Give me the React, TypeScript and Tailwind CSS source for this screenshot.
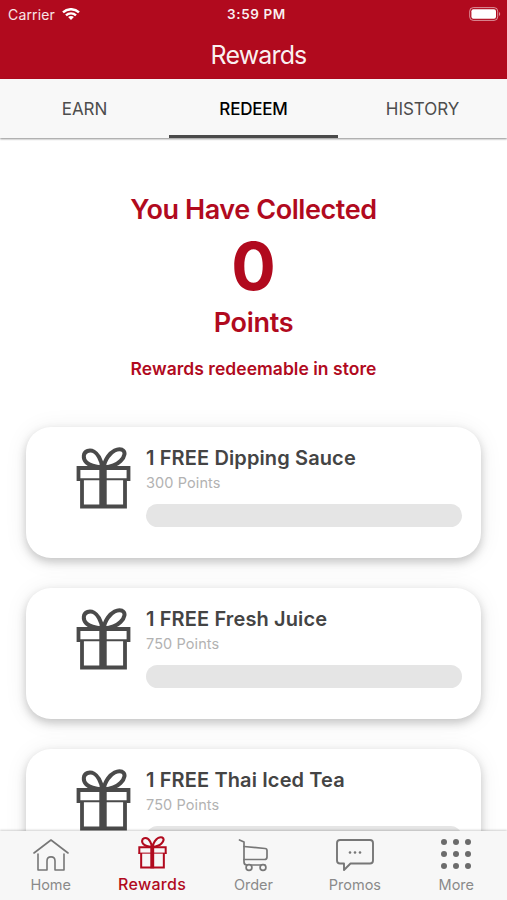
import { type ReactNode } from 'react'

type Reward = { id: number; name: string; points: number }

const rewards: Reward[] = [
  { id: 1, name: '1 FREE Dipping Sauce', points: 300 },
  { id: 2, name: '1 FREE Fresh Juice', points: 750 },
  { id: 3, name: '1 FREE Thai Iced Tea', points: 750 },
]

export default function App() {
  return (
    <div className="flex h-[900px] w-[507px] flex-col overflow-hidden bg-white font-['Inter',sans-serif]">
      <header className="h-[79px] shrink-0 bg-[#b10a1e] text-white">
        <div className="grid h-[27px] grid-cols-3 items-center pl-2 pr-[6px] text-[14px] leading-[27px]">
          <div className="flex items-center gap-[7px]">
            <span className="tracking-[0.15px] text-white/90">Carrier</span>
            <WifiIcon />
          </div>
          <span className="pl-1 pt-px text-center text-[13.5px] font-semibold tracking-[0.6px] text-white/95">3:59 PM</span>
          <div className="flex justify-end"><BatteryIcon /></div>
        </div>
        <h1 className="pl-[10px] text-center text-[25px] leading-[56px] tracking-[-0.85px] text-white/95">Rewards</h1>
      </header>

      <nav className="z-10 grid h-[59px] shrink-0 grid-cols-3 bg-[#f8f8f8] shadow-[0_1px_2px_rgba(0,0,0,0.45)]">
        <Tab label="EARN" />
        <Tab label="REDEEM" active />
        <Tab label="HISTORY" />
      </nav>

      <main className="min-h-0 flex-1 overflow-hidden">
        <section className="flex h-[289px] flex-col items-center pt-[52px] text-[#b10a1e]">
          <p className="text-[27px] font-semibold leading-10 tracking-[-0.42px]">You Have Collected</p>
          <p className="text-[66px] font-bold leading-[72px]">0</p>
          <p className="mt-[3px] text-[27px] font-semibold leading-9 tracking-[-0.3px]">Points</p>
          <p className="mt-[14px] text-[17.5px] font-semibold leading-7 tracking-[0.03px]">Rewards redeemable in store</p>
        </section>
        <div className="flex flex-col gap-[30px] px-[26px]">
          {rewards.map(r => <RewardCard key={r.id} reward={r} />)}
        </div>
      </main>

      <footer className="z-10 grid h-[69px] shrink-0 grid-cols-5 bg-[#f7f7f7] shadow-[0_-1px_2px_rgba(0,0,0,0.18)]">
        <NavItem label="Home"><HomeIcon /></NavItem>
        <NavItem label="Rewards" active><GiftIcon className="-mt-1 h-[33px] w-[29px]" /></NavItem>
        <NavItem label="Order"><CartIcon /></NavItem>
        <NavItem label="Promos"><PromoIcon /></NavItem>
        <NavItem label="More"><MoreIcon /></NavItem>
      </footer>
    </div>
  )
}

function Tab({ label, active = false }: { label: string; active?: boolean }) {
  return (
    <button className={`border-b-[3px] pt-[5px] text-[17px] leading-[51px] ${active ? 'border-[#4a4a4a] font-medium tracking-[-0.2px] text-black' : 'border-transparent tracking-[-0.05px] text-[#4d4d4d]'}`}>
      {label}
    </button>
  )
}

function RewardCard({ reward }: { reward: Reward }) {
  return (
    <article className="flex h-[131px] shrink-0 rounded-[25px] bg-white pl-[50px] pr-[19px] pt-5 shadow-[0_4px_10px_rgba(0,0,0,0.2),0_2px_24px_rgba(0,0,0,0.07)]">
      <GiftIcon className="h-[62px] w-[55px] shrink-0 text-[#4a4a4a]" />
      <div className="ml-[15px] flex-1">
        <h2 className="text-[20px] font-semibold leading-[22px] tracking-[0.12px] text-[#444]">{reward.name}</h2>
        <p className="mt-[5px] text-[14.5px] leading-[18px] tracking-[0.1px] text-[#b2b2b2]">{reward.points} Points</p>
        <div className="mt-3 h-[23px] rounded-full bg-[#e5e5e5]" />
      </div>
    </article>
  )
}

function NavItem({ label, active = false, children }: { label: string; active?: boolean; children: ReactNode }) {
  return (
    <button className={`flex flex-col items-center ${active ? 'text-[#b10a1e]' : 'text-[#777]'}`}>
      <span className="flex h-[43px] items-center pt-1">{children}</span>
      <span className={active ? 'text-[16px] font-medium leading-[21px] tracking-[0.3px]' : 'text-[14.5px] leading-[22px] text-[#8a8a8a]'}>{label}</span>
    </button>
  )
}

function GiftIcon({ className }: { className?: string }) {
  return (
    <svg className={className} viewBox="0 0 55 62" fill="none" stroke="currentColor">
      <path d="M26 20.5C20 20 14 19 10.5 15.5C6.500 11.500 7 5.500 11.500 4C16 2.500 20.500 5.500 23 10C25 13.500 26 17 26 20.5Z" strokeWidth="4" />
      <path d="M28 20.5C34 20 40 18.500 44.500 14C49 9.500 50 4.500 46 2.700C41.500 .8 35.500 4.500 32 9.500C29.500 13 28 17 28 20.5Z" strokeWidth="4" />
      <path d="M6 32V59.5H49V32" strokeWidth="3.8" />
      <path d="M2.5 34V21H52.5V34" strokeWidth="3.8" />
      <path d="M1 32.2H54" strokeWidth="2" />
      <path d="M27 19V61" strokeWidth="7.4" />
    </svg>
  )
}

function WifiIcon() {
  return (
    <svg className="h-3 w-[18px]" viewBox="0 0 18 12" fill="none" stroke="white" strokeWidth="2.4">
      <path d="M1 4.4C5.5 0.1 12.5 0.1 17 4.4" />
      <path d="M4 7.4C6.8 4.7 11.2 4.7 14 7.4" />
      <path d="M9 12L6.1 9.1C7.7 7.5 10.3 7.5 11.9 9.1Z" fill="white" stroke="none" />
    </svg>
  )
}

function BatteryIcon() {
  return (
    <svg className="h-[14px] w-8" viewBox="0 0 32 14">
      <rect x=".7" y=".6" width="28" height="12.8" rx="3.6" fill="none" stroke="white" strokeOpacity=".55" />
      <rect x="2.4" y="2.3" width="24.6" height="9.4" rx="2" fill="white" />
      <path d="M30 5C31.6 5.5 31.6 8.5 30 9Z" fill="white" fillOpacity=".55" />
    </svg>
  )
}

function HomeIcon() {
  return (
    <svg className="h-[34px] w-9" viewBox="0 0 36 34" fill="none" stroke="currentColor" strokeWidth="1.6" strokeLinecap="round" strokeLinejoin="round">
      <path d="M1 15L18 2L35 15" />
      <path d="M5 16V32H14V23C14 17.5 22 17.5 22 23V32H31V16" />
    </svg>
  )
}

function CartIcon() {
  return (
    <svg className="h-[34px] w-[31px]" viewBox="0 0 31 34" fill="none" stroke="currentColor" strokeWidth="1.7" strokeLinecap="round" strokeLinejoin="round">
      <path d="M1.5 2L6 4V24C6 26 7 27 9 27H27" />
      <path d="M6 8.5L27 10.5Q29 10.7 29 12.5V19Q29 21.5 26.5 21.5H6" />
      <circle cx="11" cy="29.5" r="2.9" fill="#f7f7f7" />
      <circle cx="25" cy="29.5" r="2.9" fill="#f7f7f7" />
    </svg>
  )
}

function PromoIcon() {
  return (
    <svg className="h-[34px] w-[38px]" viewBox="0 0 38 34" fill="none" stroke="currentColor" strokeWidth="1.9" strokeLinejoin="round">
      <path d="M4 2H34Q37 2 37 5V22.5Q37 25.5 34 25.5H14.5L8 32V25.5H4Q1 25.5 1 22.5V5Q1 2 4 2Z" />
      <g fill="currentColor" stroke="none">
        <circle cx="14" cy="14.5" r="1.3" />
        <circle cx="19" cy="14.5" r="1.3" />
        <circle cx="24" cy="14.5" r="1.3" />
      </g>
    </svg>
  )
}

function MoreIcon() {
  return (
    <svg className="-mt-px h-[32px] w-[32px]" viewBox="0 0 32 32" fill="#6b6b6b">
      {[4, 16, 28].map(y => [4, 16, 28].map(x => <circle key={`${x}-${y}`} cx={x} cy={y} r="3" />))}
    </svg>
  )
}
